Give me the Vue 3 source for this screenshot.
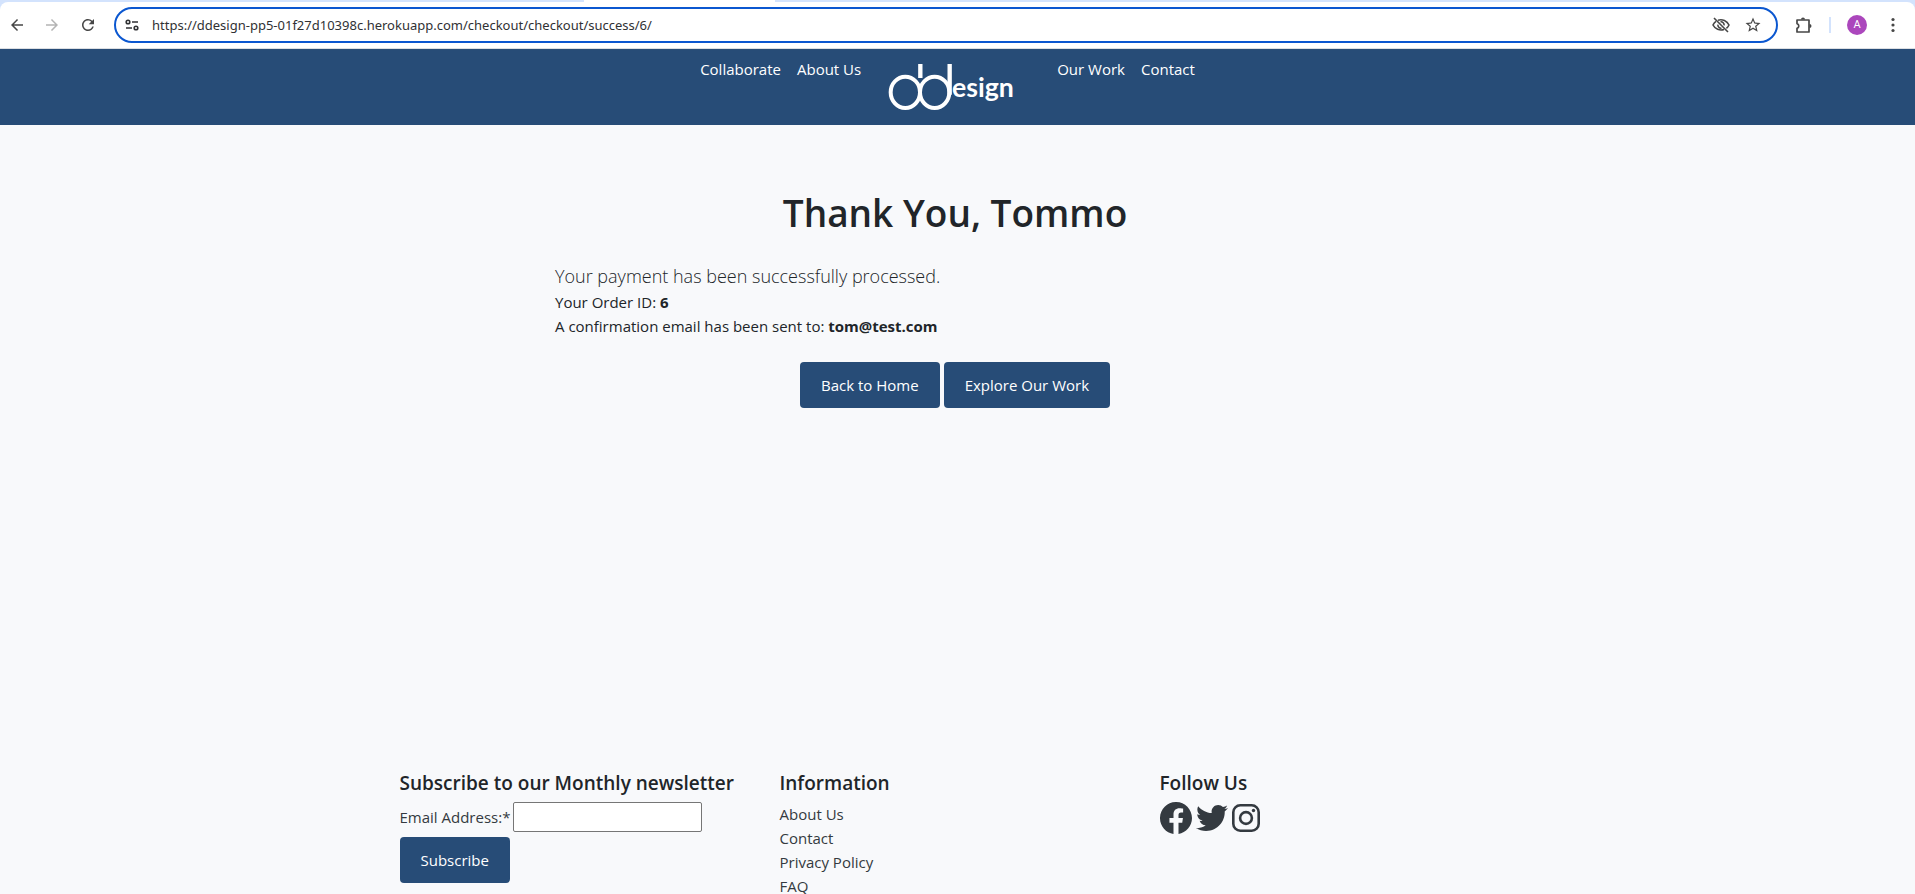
<script setup>
import { ref } from 'vue'

const address = ref('https://ddesign-pp5-01f27d10398c.herokuapp.com/checkout/checkout/success/6/')
const email = ref('')
const infoLinks = ['About Us', 'Contact', 'Privacy Policy', 'FAQ']
</script>

<template>
  <div class="window">
    <div class="tab-edge"><span class="active-tab"></span></div>
    <header class="toolbar">
      <button class="tool" aria-label="Back">
        <svg width="18" height="18" viewBox="0 0 24 24"><path d="M20 11H7.83l5.59-5.59L12 4l-8 8 8 8 1.41-1.41L7.83 13H20v-2z" /></svg>
      </button>
      <button class="tool disabled" aria-label="Forward" disabled>
        <svg width="18" height="18" viewBox="0 0 24 24"><path d="M4 11h12.17l-5.59-5.59L12 4l8 8-8 8-1.41-1.41L16.17 13H4v-2z" /></svg>
      </button>
      <button class="tool" aria-label="Reload">
        <svg width="18" height="18" viewBox="0 0 24 24"><path d="M17.65 6.35A7.958 7.958 0 0 0 12 4c-4.42 0-7.99 3.58-7.99 8s3.57 8 7.99 8c3.73 0 6.84-2.55 7.73-6h-2.08A5.99 5.99 0 0 1 12 18c-3.31 0-6-2.69-6-6s2.69-6 6-6c1.66 0 3.14.69 4.22 1.78L13 11h7V4l-2.35 2.35z" /></svg>
      </button>
      <div class="omnibox">
        <button class="site-info" aria-label="Site information">
          <svg width="14" height="14" viewBox="0 0 14 14" fill="none" stroke="#303134" stroke-width="1.6">
            <circle cx="3" cy="4" r="1.8" /><path d="M7 4h6M1 10h6" /><circle cx="11" cy="10" r="1.8" />
          </svg>
        </button>
        <div class="url">
          <label class="hidden-label" for="address" aria-label="Address"></label>
          <input id="address" v-model="address" type="text" spellcheck="false" />
        </div>
        <button class="box-icon" aria-label="Tracking protection">
          <svg width="20" height="20" viewBox="0 0 20 20" fill="none" stroke="#474747" stroke-width="1.6">
            <path d="M7 5.2A9 9 0 0 1 18 10a9 9 0 0 1-2.6 3.3M13 14.5A9 9 0 0 1 2 10a9 9 0 0 1 3-3.6" />
            <path d="M9.5 6.8a3.2 3.2 0 0 1 3.6 3.6M6.9 9.6a3.2 3.2 0 0 0 3.6 3.6M3 3l14 14" />
          </svg>
        </button>
        <button class="box-icon" aria-label="Bookmark this page">
          <svg width="18" height="18" viewBox="0 0 24 24" fill="#474747"><path d="M22 9.24l-7.19-.62L12 2 9.19 8.63 2 9.24l5.46 4.73L5.82 21 12 17.27 18.18 21l-1.63-7.03L22 9.24zM12 15.4l-3.76 2.27 1-4.28-3.32-2.88 4.38-.38L12 6.1l1.71 4.04 4.38.38-3.32 2.88 1 4.28L12 15.4z" /></svg>
        </button>
      </div>
      <button class="tool extensions" aria-label="Extensions">
        <svg width="18" height="18" viewBox="0 0 18 18">
          <path d="M2 4h12v12H2v-3.6a2.5 2.5 0 0 0 0-4.8z" fill="none" stroke="#474747" stroke-width="1.7" stroke-linejoin="round" />
          <path d="M6 3.5a2 2 0 0 1 4 0zM14.5 8a2 2 0 0 1 0 4z" />
        </svg>
      </button>
      <span class="separator"></span>
      <button class="avatar" aria-label="Profile">A</button>
      <button class="tool menu" aria-label="Menu">
        <svg width="18" height="18" viewBox="0 0 18 18"><circle cx="9" cy="3.5" r="1.6" /><circle cx="9" cy="9" r="1.6" /><circle cx="9" cy="14.5" r="1.6" /></svg>
      </button>
    </header>

    <nav class="site-nav">
      <a href="#collaborate">Collaborate</a>
      <a href="#about">About Us</a>
      <a href="#home" class="brand" aria-label="ddesign">
        <svg width="150" height="65" viewBox="0 0 450 195">
          <g fill="none" stroke="#fff" stroke-width="12">
            <ellipse cx="76" cy="112" rx="44" ry="47" />
            <ellipse cx="164" cy="112" rx="44" ry="47" />
            <path d="M121 27v42M209 27v92" stroke-width="13" />
          </g>
          <text x="216" y="125" class="brand-text">esign</text>
        </svg>
      </a>
      <a href="#work">Our Work</a>
      <a href="#contact">Contact</a>
    </nav>

    <main class="main">
      <section class="receipt">
        <h1>Thank You, Tommo</h1>
        <p class="lead">Your payment has been successfully processed.</p>
        <p>Your Order ID: <strong>6</strong></p>
        <p>A confirmation email has been sent to: <strong>tom@test.com</strong></p>
        <div class="actions">
          <a href="#home" class="btn">Back to Home</a>
          <a href="#work" class="btn">Explore Our Work</a>
        </div>
      </section>
    </main>

    <footer class="footer">
      <form @submit.prevent>
        <h5>Subscribe to our Monthly newsletter</h5>
        <div class="field">
          <label for="email">Email Address:*</label>
          <input id="email" v-model="email" type="email" />
        </div>
        <button class="btn" type="submit">Subscribe</button>
      </form>
      <div>
        <h5>Information</h5>
        <ul>
          <li v-for="link in infoLinks" :key="link"><a href="#info">{{ link }}</a></li>
        </ul>
      </div>
      <div>
        <h5>Follow Us</h5>
        <div class="social">
          <a href="#facebook" aria-label="Facebook">
            <svg width="32" height="32" viewBox="0 0 16 16"><path d="M16 8.049c0-4.446-3.582-8.05-8-8.05C3.58 0-.002 3.603-.002 8.05c0 4.017 2.926 7.347 6.75 7.951v-5.625h-2.03V8.05H6.75V6.275c0-2.017 1.195-3.131 3.022-3.131.876 0 1.791.157 1.791.157v1.98h-1.009c-.993 0-1.303.621-1.303 1.258v1.51h2.218l-.354 2.326H9.25V16c3.824-.604 6.75-3.934 6.75-7.951z" /></svg>
          </a>
          <a href="#twitter" aria-label="Twitter">
            <svg width="32" height="32" viewBox="0 0 512 512"><path d="M459.37 151.716c.325 4.548.325 9.097.325 13.645 0 138.72-105.583 298.558-298.558 298.558-59.452 0-114.68-17.219-161.137-47.106 8.447.974 16.568 1.299 25.34 1.299 49.055 0 94.213-16.568 130.274-44.832-46.132-.975-84.792-31.188-98.112-72.772 6.498.974 12.995 1.624 19.818 1.624 9.421 0 18.843-1.3 27.614-3.573-48.081-9.747-84.143-51.98-84.143-102.985v-1.299c13.969 7.797 30.214 12.67 47.431 13.319-28.264-18.843-46.781-51.005-46.781-87.391 0-19.492 5.197-37.36 14.294-52.954 51.655 63.675 129.3 105.258 216.365 109.807-1.624-7.797-2.599-15.918-2.599-24.04 0-57.828 46.782-104.934 104.934-104.934 30.213 0 57.502 12.67 76.67 33.137 23.715-4.548 46.456-13.32 66.599-25.34-7.798 24.366-24.366 44.833-46.132 57.827 21.117-2.273 41.584-8.122 60.426-16.243-14.292 20.791-32.161 39.308-52.628 54.253z" /></svg>
          </a>
          <a href="#instagram" aria-label="Instagram">
            <svg width="28" height="32" viewBox="0 0 28 32">
              <rect x="1.3" y="3.3" width="25.4" height="25.4" rx="7" fill="none" stroke="#343a40" stroke-width="2.6" />
              <circle cx="14" cy="16" r="5.9" fill="none" stroke="#343a40" stroke-width="2.6" />
              <circle cx="21.5" cy="8.5" r="1.7" />
            </svg>
          </a>
        </div>
      </div>
    </footer>
  </div>
</template>

<style>
body {
  margin: 0;
  background: #f8f9fb;
}
</style>

<style scoped>
.window {
  height: 100vh;
  overflow: hidden;
  font: 15px/24px "Open Sans", "Noto Sans", sans-serif;
  color: #212529;
}
button {
  border: 0;
  padding: 0;
  background: none;
  font: inherit;
}
svg {
  display: block;
}
a {
  color: inherit;
  text-decoration: none;
}
.tab-edge {
  height: 2px;
  background: #d3e3fd;
}
.active-tab {
  display: block;
  width: 191px;
  height: 2px;
  margin-left: 584px;
  background: #fff;
}
.toolbar {
  display: flex;
  align-items: center;
  height: 46px;
  padding: 0 13px 0 0;
  border-bottom: 1px solid #dcdfe3;
  border-radius: 8px 8px 0 0;
  background: #fff;
  box-shadow: 0 -8px 0 #d3e3fd;
  clip-path: inset(0);
}
.tool {
  display: flex;
  justify-content: center;
  width: 36px;
  fill: #474747;
}
.toolbar > .tool:first-child {
  width: 34px;
}
.disabled {
  fill: #b4b4b4;
}
.omnibox {
  display: flex;
  flex: 1;
  align-items: center;
  box-sizing: border-box;
  height: 36px;
  margin-left: 8px;
  padding: 0 13px 0 9px;
  border: 2px solid #0b57d0;
  border-radius: 18px;
}
.url {
  flex: 1;
  margin-left: 13px;
}
.url input {
  display: block;
  box-sizing: border-box;
  width: 100%;
  height: 28px;
  padding: 0;
  border: 0;
  outline: 0;
  background: none;
  font: 13px/24px "Noto Sans", "Open Sans", sans-serif;
  color: #303134;
}
.hidden-label {
  position: absolute;
}
.box-icon {
  display: flex;
  justify-content: center;
  width: 20px;
}
.box-icon + .box-icon {
  margin-left: 12px;
}
.extensions {
  margin-left: 8px;
}
.separator {
  width: 2px;
  height: 16px;
  margin: 0 16px 0 7px;
  background: #d3e3fd;
}
.avatar {
  width: 20px;
  height: 20px;
  border-radius: 50%;
  background: #ab47bc;
  color: #fff;
  font: 11px/20px Roboto, sans-serif;
}
.menu {
  width: 18px;
  margin-left: 17px;
}
.site-nav {
  display: flex;
  justify-content: center;
  align-items: flex-start;
  height: 70px;
  padding: 6px 20px 0 0;
  background: #274c77;
  color: #fff;
}
.site-nav a {
  padding: 2px 8px 0;
}
.site-nav .brand {
  padding: 0 19px 0 11px;
}
.brand-text {
  fill: #fff;
  font: 700 80px Lato, sans-serif;
}
.main {
  min-height: 586px;
  padding: 60px 5px 0 0;
}
.receipt {
  max-width: 800px;
  margin: 0 auto;
}
h1 {
  margin: 0 0 22px;
  font-size: 37px;
  line-height: 56px;
  font-weight: 600;
  text-align: center;
}
p {
  margin: 0;
}
.lead {
  font-size: 18px;
  line-height: 27px;
  font-weight: 300;
}
strong {
  font-weight: 700;
}
.actions {
  display: flex;
  justify-content: center;
  gap: 4px;
  margin-top: 24px;
}
.btn {
  padding: 11px 21px;
  border-radius: 4px;
  background: #274c77;
  color: #fff;
}
.footer {
  display: grid;
  grid-template-columns: repeat(3, 1fr);
  gap: 24px;
  max-width: 1116px;
  margin: 0 auto;
}
h5 {
  margin: 0 0 7px;
  font-size: 19px;
  line-height: 24px;
  font-weight: 600;
}
.field {
  display: flex;
  align-items: center;
  gap: 3px;
  margin-bottom: 5px;
}
.field input {
  box-sizing: border-box;
  width: 189px;
  height: 30px;
  border: 1px solid #767676;
  border-radius: 2px;
  background: #fff;
  font: inherit;
}
.footer label,
.footer li {
  color: #343a40;
}
ul {
  margin: 0;
  padding: 0;
  list-style: none;
}
.social {
  display: flex;
  gap: 4px;
  fill: #343a40;
}
</style>
